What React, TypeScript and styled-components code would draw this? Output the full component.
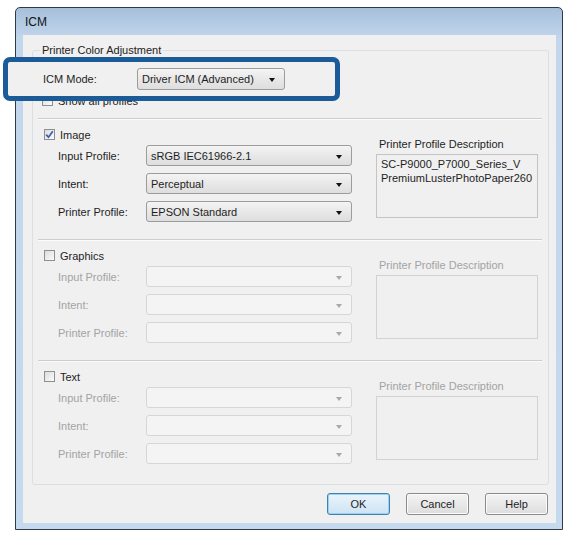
import styled, { createGlobalStyle } from 'styled-components';

const GlobalStyle = createGlobalStyle`
  body {
    margin: 0;
    background: #fff;
    font-family: "Liberation Sans", Arial, sans-serif;
    font-size: 11px;
    color: #1e1e1e;
  }
`;

const Page = styled.div`
  width: 570px;
  height: 534px;
  padding: 7px 0 0 15px;
  box-sizing: border-box;
`;

const Window = styled.div`
  width: 548px;
  height: 523px;
  box-sizing: border-box;
  border: 1px solid #2f3a44;
  border-radius: 5px 5px 0 0;
  background: linear-gradient(#a6bfdb, #c2d6ec 30px, #c6daef);
  padding: 0 6px 6px 7px;
  display: flex;
  flex-direction: column;
`;

const TitleBar = styled.div`
  height: 27px;
  display: flex;
  align-items: center;
  padding-left: 2px;
  font-size: 12px;
  color: #111;
`;

const Client = styled.div`
  flex: 1;
  background: #f0f0f0;
  padding: 8px 7px 8px 9px;
  display: flex;
  flex-direction: column;
`;

const Group = styled.fieldset`
  margin: 0;
  padding: 0 6px 3px 5px;
  border: 1px solid #d9dfe4;
  border-radius: 3px;
  min-width: 0;
`;

const Legend = styled.legend`
  margin-left: 2px;
  padding: 0 2px;
  line-height: 15px;
  color: #222;
`;

const ModeRow = styled.div`
  position: relative;
  display: flex;
  align-items: center;
  height: 22px;
  margin-top: 10px;
  padding-left: 5px;
`;

// the blue highlight frame drawn over the dialog
const Callout = styled.div`
  position: absolute;
  left: -35px;
  top: -11px;
  width: 337px;
  height: 44px;
  box-sizing: border-box;
  border: 5px solid #1b5b97;
  border-radius: 7px;
  background: #f0f0f0;
  z-index: 0;
`;

const ModeLabel = styled.span`
  position: relative;
  z-index: 1;
  width: 94px;
`;

const ShowAllRow = styled.div`
  display: flex;
  align-items: center;
  gap: 5px;
  height: 13px;
  margin-top: 4px;
  margin-bottom: 11px;
  padding-left: 4px;
`;

const Section = styled.div`
  height: 121px;
  box-sizing: border-box;
  border-top: 1px solid #cdcdcd;
  box-shadow: inset 0 1px #fbfbfb;
  display: flex;
`;

const LeftCol = styled.div`
  padding: 9px 0 0 6px;
  display: flex;
  flex-direction: column;
`;

const SectionHead = styled.label`
  display: flex;
  align-items: center;
  gap: 5px;
  height: 13px;
  margin-bottom: 4px;
`;

const Fields = styled.div`
  display: flex;
  flex-direction: column;
  gap: 7px;
`;

const FieldRow = styled.div<{ $disabled?: boolean }>`
  display: flex;
  align-items: center;
  height: 21px;
  padding-left: 14px;
  color: ${p => (p.$disabled ? '#a3a3a3' : '#1e1e1e')};
`;

const FieldLabel = styled.span`
  width: 88px;
`;

const Select = styled.div<{ $width: number; $disabled?: boolean; $height?: number }>`
  position: relative;
  z-index: 1;
  width: ${p => p.$width}px;
  height: ${p => p.$height ?? 21}px;
  box-sizing: border-box;
  border: 1px solid ${p => (p.$disabled ? '#d6d6d6' : '#9c9c9c')};
  border-radius: 3px;
  background: ${p =>
    p.$disabled ? '#f4f4f4' : 'linear-gradient(#f4f4f4, #e8e8e8 50%, #dedede)'};
  display: flex;
  align-items: center;
  padding-left: 4px;
  color: #1e1e1e;

  &::after {
    content: '';
    position: absolute;
    right: 9px;
    top: 50%;
    margin-top: -1px;
    border-left: 3.5px solid transparent;
    border-right: 3.5px solid transparent;
    border-top: 4px solid ${p => (p.$disabled ? '#a9a9a9' : '#111')};
  }
`;

const DescCol = styled.div<{ $disabled?: boolean }>`
  margin-left: 24px;
  padding-top: 17px;
  display: flex;
  flex-direction: column;
  color: ${p => (p.$disabled ? '#a3a3a3' : '#1e1e1e')};
`;

const DescLabel = styled.div`
  height: 16px;
  line-height: 16px;
  padding-left: 3px;
`;

const DescBox = styled.div<{ $disabled?: boolean }>`
  margin-top: 2px;
  width: 162px;
  height: 64px;
  box-sizing: border-box;
  border: 1px solid ${p => (p.$disabled ? '#d2d2d2' : '#c4c4c4')};
  padding: 2px 4px;
  line-height: 14px;
  color: #1e1e1e;
`;

const Box = styled.span`
  width: 11px;
  height: 11px;
  box-sizing: border-box;
  border: 1px solid #8f8f8f;
  background: linear-gradient(135deg, #dcdcdc, #fbfbfb);
  display: inline-flex;
  align-items: center;
  justify-content: center;
`;

const ButtonRow = styled.div`
  margin-top: auto;
  display: flex;
  justify-content: flex-end;
  gap: 16px;
  padding-right: 1px;
`;

const Button = styled.button<{ $default?: boolean }>`
  width: 63px;
  height: 22px;
  padding: 0;
  font: inherit;
  color: #1e1e1e;
  border: 1px solid ${p => (p.$default ? '#3c83b5' : '#8a8a8a')};
  border-radius: 3px;
  background: ${p =>
    p.$default
      ? 'linear-gradient(#eaf4fb, #dbecf8 50%, #cfe3f3)'
      : 'linear-gradient(#f3f3f3, #e9e9e9 50%, #dcdcdc)'};
  box-shadow: inset 0 0 0 1px ${p => (p.$default ? '#9fd0f0' : '#fcfcfc')};
`;

const CheckBox = ({ checked }: { checked?: boolean }) => (
  <Box>
    {checked && (
      <svg width="9" height="9" viewBox="0 0 9 9">
        <path d="M1.2 4.6 L3.5 7.2 L7.8 1.2" fill="none" stroke="#3a5db0" strokeWidth="1.7" />
      </svg>
    )}
  </Box>
);

type SectionProps = {
  title: string;
  enabled?: boolean;
  values?: string[];
  desc?: string[];
};

const labels = ['Input Profile:', 'Intent:', 'Printer Profile:'];

const ProfileSection = ({ title, enabled, values, desc }: SectionProps) => (
  <Section>
    <LeftCol>
      <SectionHead>
        <CheckBox checked={enabled} />
        {title}
      </SectionHead>
      <Fields>
        {labels.map((l, i) => (
          <FieldRow key={l} $disabled={!enabled}>
            <FieldLabel>{l}</FieldLabel>
            <Select $width={206} $disabled={!enabled}>
              {values ? values[i] : ''}
            </Select>
          </FieldRow>
        ))}
      </Fields>
    </LeftCol>
    <DescCol $disabled={!enabled}>
      <DescLabel>Printer Profile Description</DescLabel>
      <DescBox $disabled={!enabled}>
        {desc?.map(d => (
          <div key={d}>{d}</div>
        ))}
      </DescBox>
    </DescCol>
  </Section>
);

export default function App() {
  return (
    <Page>
      <GlobalStyle />
      <Window>
        <TitleBar>ICM</TitleBar>
        <Client>
          <Group>
            <Legend>Printer Color Adjustment</Legend>
            <ModeRow>
              <Callout />
              <ModeLabel>ICM Mode:</ModeLabel>
              <Select $width={148} $height={22}>
                Driver ICM (Advanced)
              </Select>
            </ModeRow>
            <ShowAllRow>
              <CheckBox />
              Show all profiles
            </ShowAllRow>
            <ProfileSection
              title="Image"
              enabled
              values={['sRGB IEC61966-2.1', 'Perceptual', 'EPSON Standard']}
              desc={['SC-P9000_P7000_Series_V', 'PremiumLusterPhotoPaper260']}
            />
            <ProfileSection title="Graphics" />
            <ProfileSection title="Text" />
          </Group>
          <ButtonRow>
            <Button $default>OK</Button>
            <Button>Cancel</Button>
            <Button>Help</Button>
          </ButtonRow>
        </Client>
      </Window>
    </Page>
  );
}
